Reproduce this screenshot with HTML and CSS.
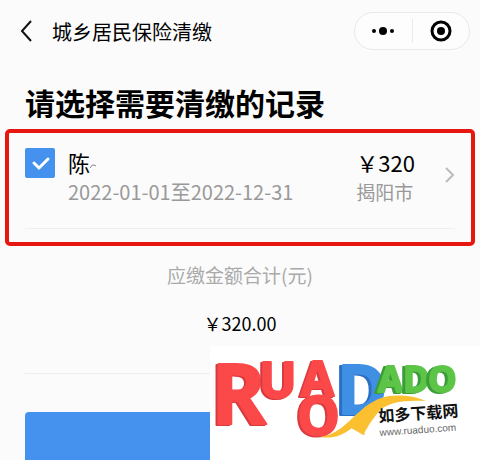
FILE: index.html
```html
<!DOCTYPE html>
<html lang="zh-CN">
<head>
    <meta charset="UTF-8">
    <meta name="viewport" content="width=device-width, initial-scale=1.0">
    <title>城乡居民保险清缴</title>
    <link rel="stylesheet" href="styles.css">
</head>
<body>
    <header class="navbar">
        <button class="back" type="button" aria-label="返回">
            <svg width="12" height="22" viewBox="0 0 12 22"><path d="M11 1 L2 11 L11 21"/></svg>
        </button>
        <span class="nav-title">城乡居民保险清缴</span>
        <div class="capsule">
            <button type="button" aria-label="更多">
                <svg width="24" height="8" viewBox="0 0 24 8"><circle cx="3" cy="4" r="2"/><circle cx="12" cy="4" r="4"/><circle cx="21" cy="4" r="2"/></svg>
            </button>
            <button type="button" aria-label="关闭">
                <svg width="22" height="22" viewBox="0 0 22 22"><circle class="ring" cx="11" cy="11" r="9"/><circle cx="11" cy="11" r="4"/></svg>
            </button>
        </div>
    </header>

    <main>
        <h1>请选择需要清缴的记录</h1>

        <section class="highlight">
            <div class="record">
                <input type="checkbox" id="record1" class="check" checked>
                <label for="record1" class="person">
                    <span class="name">陈<svg class="smudge" width="7" height="6" viewBox="0 0 7 6"><path d="M0 5 Q2 1 4 2 L6 3"/></svg></span>
                    <span class="sub date">2022-01-01至2022-12-31</span>
                </label>
                <div class="amount">
                    <span class="price">￥320</span>
                    <span class="sub">揭阳市</span>
                </div>
                <svg class="arrow" width="10" height="18" viewBox="0 0 10 18"><path d="M1 2 L8 9 L1 16"/></svg>
            </div>
        </section>

        <section class="total">
            <p class="total-label">应缴金额合计(元)</p>
            <p class="total-value">￥320.00</p>
        </section>

        <div class="submit-area">
            <button class="submit" type="button" aria-label="提交"></button>
        </div>
    </main>

    <aside class="watermark">
        <svg width="270" height="114" viewBox="0 0 270 114">
            <g class="letters">
                <text class="blue" x="127" y="68">D</text>
                <text class="green small" x="168" y="46">A</text>
                <text class="green small" x="193" y="46">D</text>
                <text class="green small" x="218" y="46">O</text>
                <text class="red big" x="1" y="78">R</text>
                <text class="red mid" x="49" y="52">U</text>
                <text class="red tall" x="91" y="50">A</text>
                <text class="red round" x="87" y="89">O</text>
            </g>
            <path class="fold" d="M138 80 L150 78 L155 89 L145 84 Z"/>
            <path class="swoosh" d="M110 91 C138 88 148 55 179 50 Q199 48 216 55 C193 54 179 56 169 65 Q160 76 153 89 L142 82 C132 90 122 93 110 91 Z"/>
            <g transform="rotate(-4 169 78)">
                <text class="brand" x="169" y="76">如多下载网</text>
                <a href="#"><text class="site" x="169" y="90">www.ruaduo.com</text></a>
            </g>
        </svg>
    </aside>
</body>
</html>
```
FILE: styles.css
```css
* {
    box-sizing: border-box;
}

body {
    margin: 0;
    min-height: 100vh;
    display: flex;
    flex-direction: column;
    position: relative;
    overflow: hidden;
    background-color: #fbfbfb;
    color: #000;
    font-family: "Noto Sans CJK SC", sans-serif;
}

button {
    border: none;
    background: none;
    padding: 0;
}

svg {
    display: block;
}

h1, p {
    margin: 0;
}

.navbar {
    display: flex;
    align-items: center;
    height: 62px;
    padding: 0 10px 0 20px;
}

.back path {
    fill: none;
    stroke: #111;
    stroke-width: 2;
}

.nav-title {
    margin-left: 20px;
    font-size: 20px;
    flex: 1;
}

.capsule {
    display: flex;
    align-items: center;
    width: 116px;
    height: 38px;
    border: 1px solid #e9e9e9;
    border-radius: 19px;
    background-color: #fdfdfd;
}

.capsule button {
    flex: 1;
    height: 24px;
    display: flex;
    align-items: center;
    justify-content: center;
}

.capsule button + button {
    border-left: 1px solid #e9e9e9;
}

.ring {
    fill: none;
    stroke: #000;
    stroke-width: 3;
}

main {
    flex: 1;
    display: flex;
    flex-direction: column;
}

h1 {
    padding: 16px 25px 0;
    font-size: 30px;
    line-height: 48px;
    font-weight: 700;
}

.highlight {
    margin: 3px 5px 0;
    padding: 15px 16px 13px;
    border: 4px solid #e61610;
    border-radius: 5px;
}

.record {
    display: flex;
    align-items: flex-start;
    padding-bottom: 20px;
    border-bottom: 1px solid #eee;
}

.check {
    appearance: none;
    width: 30px;
    height: 30px;
    margin: 0;
    border-radius: 2px;
    background: #4591ee url("data:image/svg+xml,%3Csvg xmlns='http://www.w3.org/2000/svg' viewBox='0 0 30 30'%3E%3Cpath d='M9 15l5 5 9-9' fill='none' stroke='white' stroke-width='3' stroke-linecap='round'/%3E%3C/svg%3E");
}

.person {
    flex: 1;
    margin-left: 13px;
}

.person, .amount {
    display: flex;
    flex-direction: column;
}

.name, .price {
    display: flex;
    align-items: center;
    font-size: 22px;
    line-height: 28px;
}

.smudge {
    margin-top: 8px;
}

.smudge path, .arrow path {
    fill: none;
    stroke: #888;
}

.sub {
    font-size: 19px;
    line-height: 32px;
    color: #999;
}

.date {
    font-size: 20px;
}

.arrow {
    margin: 18px 0 0 30px;
}

.arrow path {
    stroke: #bbb;
    stroke-width: 2;
}

.total {
    text-align: center;
    padding-top: 13px;
}

.total-label {
    font-size: 19px;
    line-height: 32px;
    color: #aaa;
}

.total-value {
    margin-top: 16px;
    font-size: 18px;
    line-height: 32px;
}

.submit-area {
    flex: 1;
    display: flex;
    margin: 34px 25px 0;
    padding-top: 38px;
    border-top: 1px solid #eee;
}

.submit {
    flex: 1;
    border-radius: 4px 4px 0 0;
    background-color: #4591ee;
}

/* site logo over the bottom right corner */
.watermark {
    position: absolute;
    right: 0;
    bottom: 0;
    background-color: #fff;
}

.letters {
    font-family: "Open Sans", sans-serif;
    font-weight: 700;
    stroke-width: 2;
    stroke-linejoin: round;
}

.red {
    fill: #fb4848;
    stroke: #fb4848;
    filter: drop-shadow(-2px 1px 0 #d83a3e);
}

.blue {
    fill: #3f8fe4;
    stroke: #3f8fe4;
    font-size: 68px;
    filter: drop-shadow(-3px 1px 0 #2b6fc4);
}

.green {
    fill: #5cc548;
    stroke: #5cc548;
    filter: drop-shadow(-3px 1px 0 #3c9c3a);
}

.big {
    font-size: 84px;
}

.mid {
    font-size: 50px;
}

.tall {
    font-size: 48px;
}

.round {
    font-size: 54px;
}

.small {
    font-size: 36px;
}

.swoosh {
    fill: #fbc02f;
}

.fold {
    fill: #e89a22;
}

.brand {
    font-size: 16px;
    font-weight: 700;
    fill: #111;
}

.site {
    font-family: "Liberation Sans", sans-serif;
    font-size: 10px;
    fill: #666;
}
```
